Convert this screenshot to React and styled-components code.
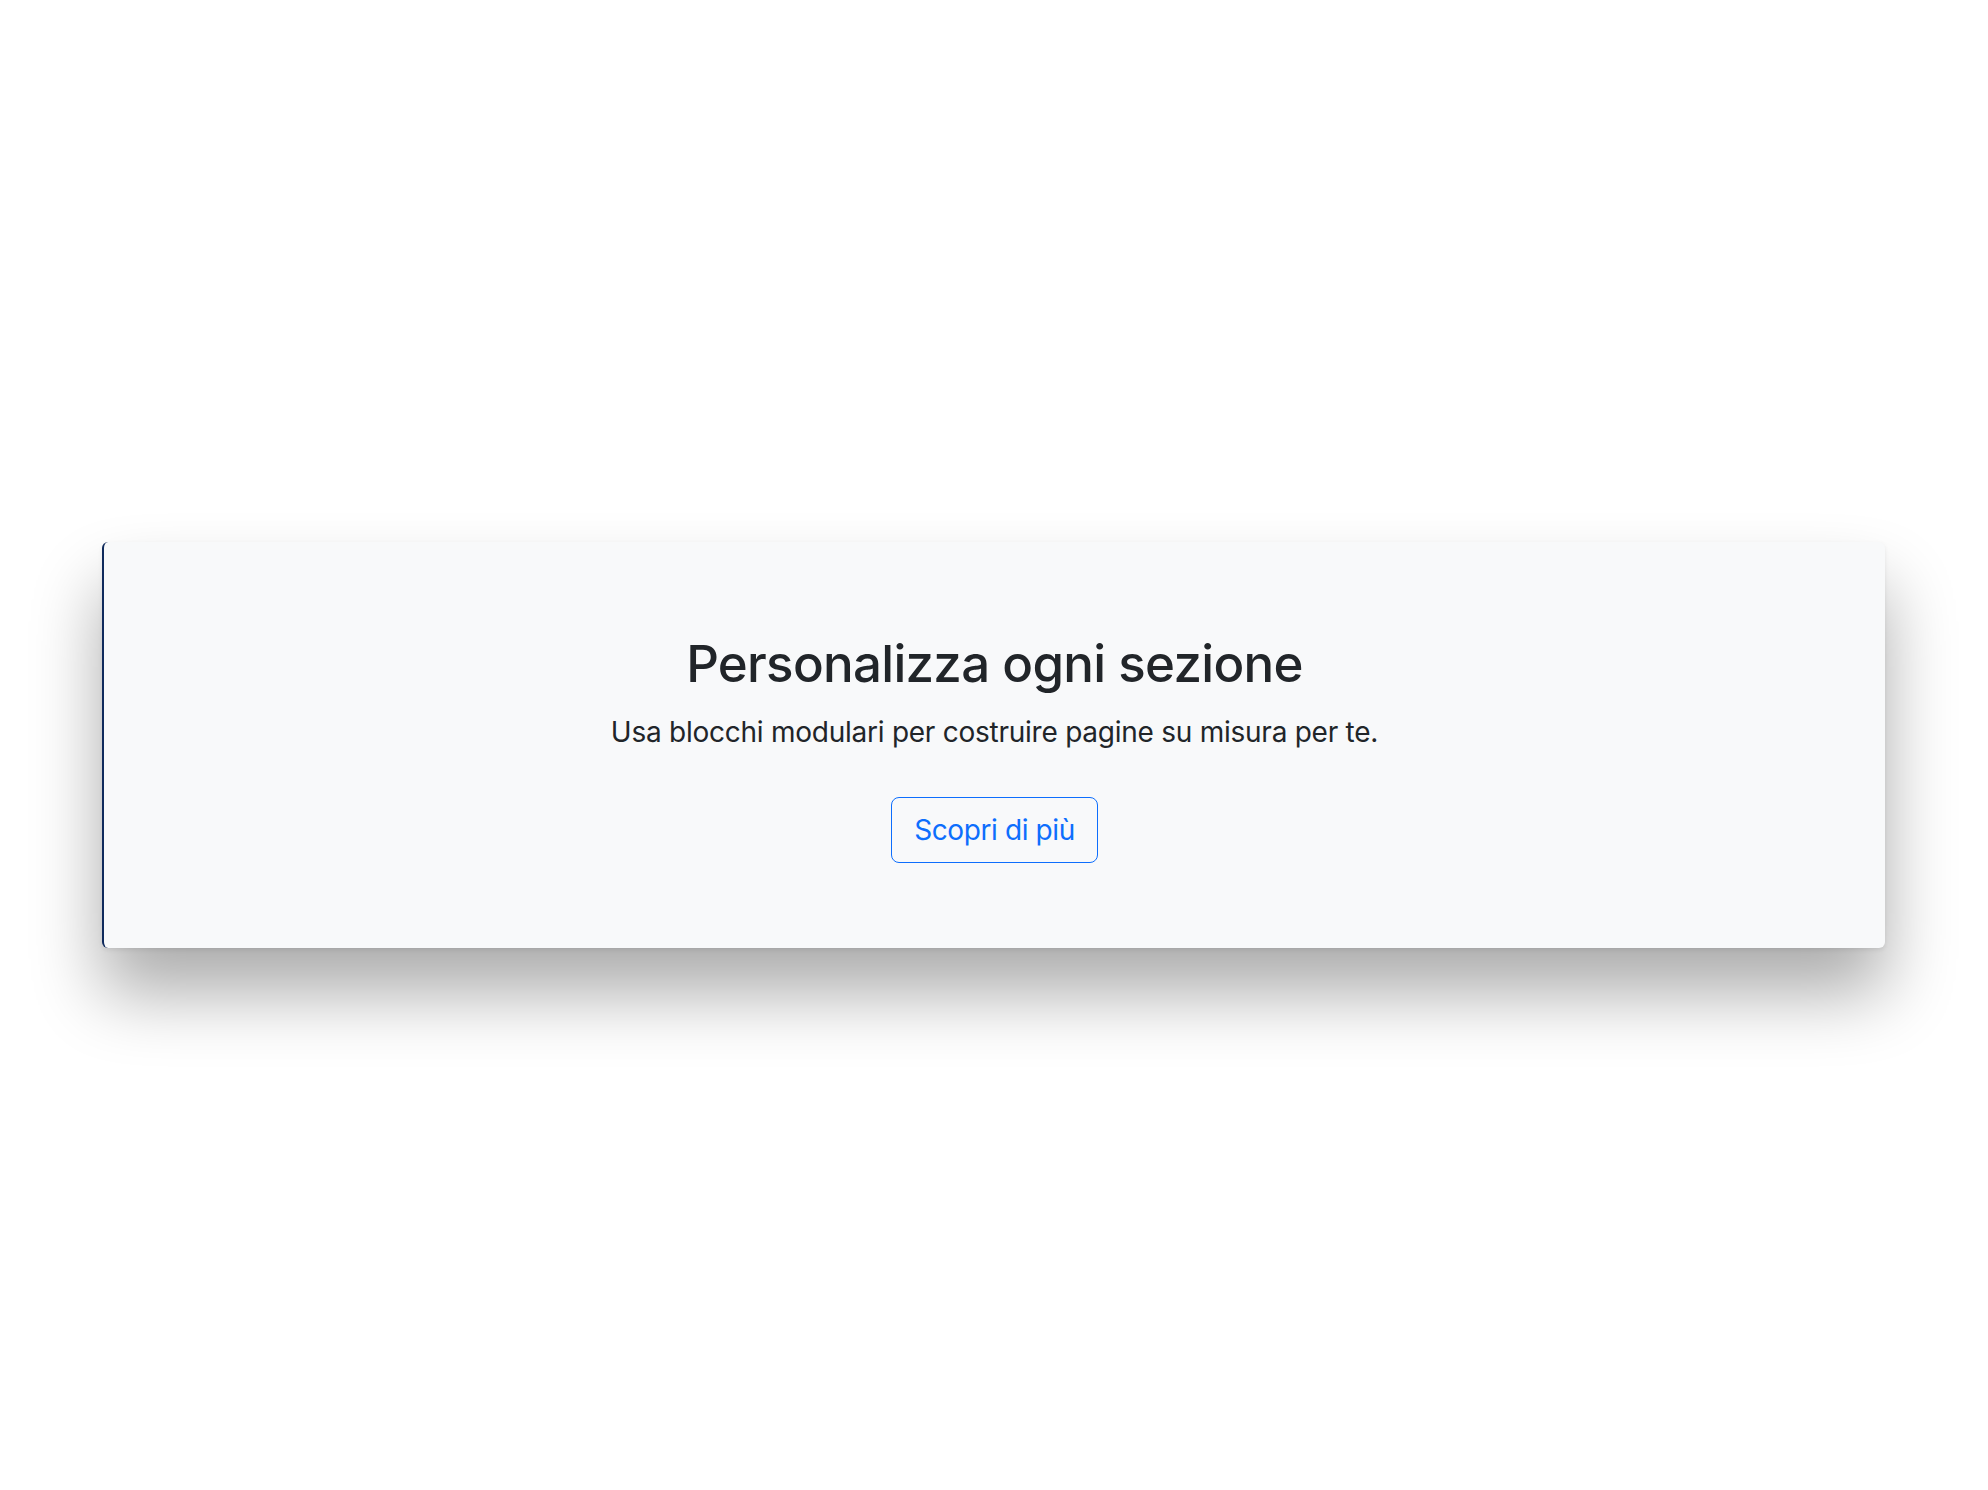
import React from "react";
import styled, { createGlobalStyle } from "styled-components";

const Global = createGlobalStyle`
  html, body { margin: 0; padding: 0; background: #ffffff; }
  body { font-family: Inter, "Noto Sans", "Liberation Sans", sans-serif; color: #212529; }
  #root { min-height: 100vh; }
`;

const Page = styled.main`
  min-height: 100vh;
  box-sizing: border-box;
  display: flex;
  align-items: center;
  padding: 0 103px 0 102px;
`;

const Hero = styled.section`
  flex: 1;
  box-sizing: border-box;
  background: #f8f9fa;
  border-left: 2px solid #0f2a5c;
  border-radius: 6px;
  box-shadow: 0 45px 70px rgba(0, 0, 0, 0.33), 0 2px 4px rgba(0, 0, 0, 0.08);
  padding: 91px 24px 85px;
  display: flex;
  flex-direction: column;
  align-items: center;
  text-align: center;
`;

const Title = styled.h2`
  margin: 0 0 16px;
  font-size: 51px;
  font-weight: 500;
  line-height: 1.2;
  letter-spacing: -0.7px;
  color: #212529;
`;

const Lead = styled.p`
  margin: 0 0 44px;
  font-size: 28px;
  font-weight: 400;
  line-height: 1.5;
  letter-spacing: -0.25px;
  color: #212529;
`;

const OutlineButton = styled.button`
  font-family: inherit;
  font-size: 28px;
  line-height: 1.5;
  letter-spacing: -0.4px;
  padding: 11px 22px;
  color: #0d6efd;
  background: transparent;
  border: 1px solid #0d6efd;
  border-radius: 8px;
  cursor: pointer;
`;

export default function App() {
  return (
    <>
      <Global />
      <Page>
        <Hero>
          <Title>Personalizza ogni sezione</Title>
          <Lead>Usa blocchi modulari per costruire pagine su misura per te.</Lead>
          <OutlineButton>Scopri di più</OutlineButton>
        </Hero>
      </Page>
    </>
  );
}
